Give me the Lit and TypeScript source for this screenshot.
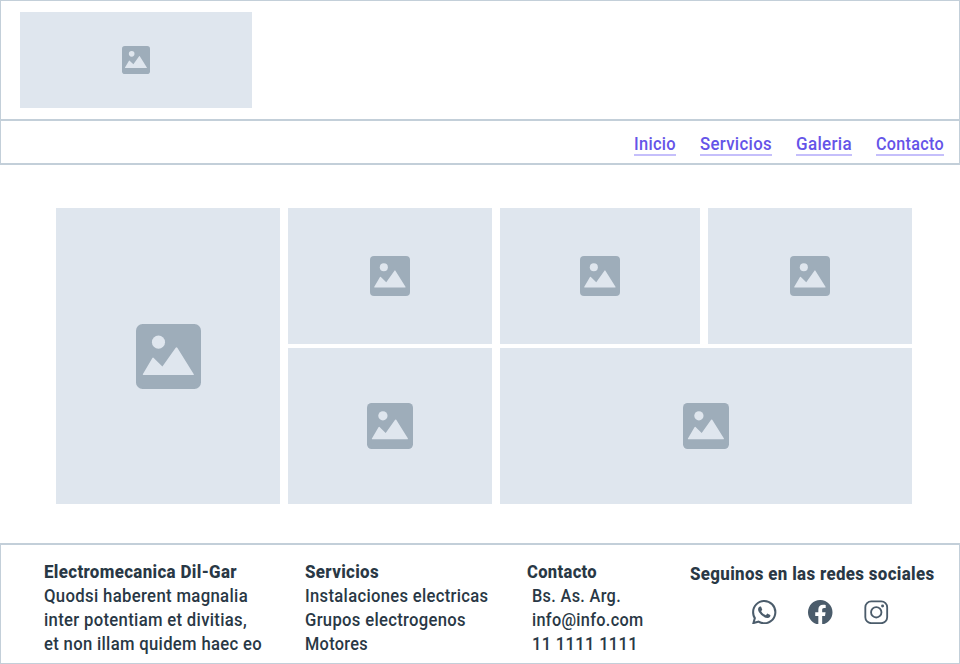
import { LitElement, html, css, svg } from "lit";
import { customElement, property } from "lit/decorators.js";

/** One line of text set to a fixed measure. */
@customElement("text-line")
class TextLine extends LitElement {
  @property() text = "";
  @property({ type: Number }) width = 0;

  static styles = css`
    :host { display: block; height: 24px; }
    .line { display: block; height: 24px; overflow: visible; fill: currentColor; white-space: pre; letter-spacing: 0.35px; }
  `;

  render() {
    return html`<svg class="line" width=${this.width} height="24">
      ${svg`<text x="0" y="18" textLength=${this.width} lengthAdjust="spacingAndGlyphs">${this.text}</text>`}
    </svg>`;
  }
}

/** Grey block with a centred picture glyph. */
@customElement("image-placeholder")
class ImagePlaceholder extends LitElement {
  @property({ type: Number }) size = 40;

  static styles = css`
    :host { display: flex; align-items: center; justify-content: center; background: #dfe6ee; }
    .glyph { display: block; }
    .frame { fill: #9eadba; }
    .scene { fill: #dfe6ee; }
  `;

  render() {
    return html`<svg class="glyph" width=${this.size} height=${this.size} viewBox="0 0 64.5 64.5">
      <rect class="frame" x="0" y="0" width="64.5" height="64.5" rx="6.5" />
      <circle class="scene" cx="22.3" cy="18" r="6.5" />
      <path class="scene" d="M6.900 49.700Q6.200 50.700 7.500 50.700H56.700Q58 50.700 57.200 49.500L41 23.600Q40.200 22.500 39.400 23.600L26.200 42.200L17.600 33.700Q16.800 32.900 16.100 34Z" />
    </svg>`;
  }
}

const whatsapp = html`<svg class="icon" viewBox="0 0 16 16"><path d="M13.601 2.326A7.854 7.854 0 0 0 7.994 0C3.627 0 .068 3.558.064 7.926c0 1.399.366 2.760 1.057 3.965L0 16l4.204-1.102a7.933 7.933 0 0 0 3.790.965h.004c4.368 0 7.926-3.558 7.930-7.930A7.898 7.898 0 0 0 13.600 2.326zM7.994 14.521a6.573 6.573 0 0 1-3.356-.920l-.240-.144-2.494.654.666-2.433-.156-.251a6.560 6.560 0 0 1-1.007-3.505c0-3.626 2.957-6.584 6.591-6.584a6.560 6.560 0 0 1 4.660 1.931 6.557 6.557 0 0 1 1.928 4.660c-.004 3.639-2.961 6.592-6.592 6.592zm3.615-4.934c-.197-.099-1.170-.578-1.353-.646-.182-.065-.315-.099-.445.099-.133.197-.513.646-.627.775-.114.133-.232.148-.430.050-.197-.100-.836-.308-1.592-.985-.590-.525-.985-1.175-1.103-1.372-.114-.198-.011-.304.088-.403.087-.088.197-.232.296-.346.100-.114.133-.198.198-.330.065-.134.034-.248-.015-.347-.050-.099-.445-1.076-.612-1.470-.160-.389-.323-.335-.445-.340-.114-.007-.247-.007-.380-.007a.729.729 0 0 0-.529.247c-.182.198-.691.677-.691 1.654 0 .977.710 1.916.810 2.049.098.133 1.394 2.132 3.383 2.992.470.205.840.326 1.129.418.475.152.904.129 1.246.080.380-.058 1.171-.480 1.338-.943.164-.464.164-.860.114-.943-.049-.084-.182-.133-.380-.232z" /></svg>`;

const facebook = html`<svg class="icon" viewBox="0 0 16 16"><path d="M16 8.049c0-4.446-3.582-8.050-8-8.050C3.580 0-.002 3.603-.002 8.050c0 4.017 2.926 7.347 6.750 7.951v-5.625h-2.030V8.050H6.750V6.275c0-2.017 1.195-3.131 3.022-3.131.876 0 1.791.157 1.791.157v1.980h-1.009c-.993 0-1.303.621-1.303 1.258v1.510h2.218l-.354 2.326H9.250V16c3.824-.604 6.750-3.934 6.750-7.951z" /></svg>`;

const instagram = html`<svg class="icon outline" viewBox="0 0 24 24">
  <rect x="1.300" y="1.300" width="21.400" height="21.400" rx="5.800" />
  <circle cx="12" cy="12" r="5.100" />
  <circle class="dot" cx="18.200" cy="5.900" r="1.450" />
</svg>`;

const links: [string, number][] = [
  ["Inicio", 42],
  ["Servicios", 72],
  ["Galeria", 56],
  ["Contacto", 68],
];

const columns = [
  {
    name: "company",
    title: ["Electromecanica Dil-Gar", 193],
    lines: [
      ["Quodsi haberent magnalia", 204],
      ["inter potentiam et divitias,", 203],
      ["et non illam quidem haec eo", 218],
    ],
  },
  {
    name: "services",
    title: ["Servicios", 74],
    lines: [
      ["Instalaciones electricas", 183.5],
      ["Grupos electrogenos", 161],
      ["Motores", 63],
    ],
  },
  {
    name: "contact",
    title: ["Contacto", 70],
    lines: [
      ["Bs. As. Arg.", 89],
      ["info@info.com", 111.5],
      ["11 1111 1111", 106],
    ],
  },
];

@customElement("app-root")
class AppRoot extends LitElement {
  static styles = css`
    :host {
      display: flex;
      flex-direction: column;
      width: 960px;
      height: 664px;
      background: #fff;
      color: #293845;
      font: 500 18px/24px Roboto, "Liberation Sans", sans-serif;
    }
    * { box-sizing: border-box; }
    .header { height: 120px; padding: 11px 19px; border: 1px solid #c3cfd9; }
    .logo { width: 232px; height: 96px; }
    .nav {
      display: flex;
      justify-content: flex-end;
      gap: 24px;
      height: 45px;
      padding: 11px 15px 0 0;
      border: 1px solid #c3cfd9;
      border-bottom-width: 2px;
    }
    .link { height: 24px; border-bottom: 2px solid #c5bffb; color: #6554e8; text-decoration: none; }
    .gallery {
      display: grid;
      grid-template: 136px 156px / 224px 204px 200px 204px;
      gap: 4px 8px;
      padding: 43px 48px 39px 56px;
    }
    .tall { grid-row: span 2; }
    .wide { grid-column: span 2; }
    .footer {
      display: flex;
      height: 121px;
      padding: 15px 0 0 43px;
      border: 1px solid #c3cfd9;
      border-top-width: 2px;
    }
    .title { font-weight: 800; }
    .company { width: 261px; }
    .services { width: 222px; }
    .contact { width: 163px; }
    .contact .lines { padding-left: 5px; }
    .social { padding-top: 2px; }
    .icons { display: flex; gap: 31.5px; padding: 13.7px 0 0 62px; }
    .icon { display: block; width: 24.5px; height: 24.5px; fill: #4b5c6b; }
    .outline { fill: none; stroke: #4b5c6b; stroke-width: 1.8; }
    .dot { fill: #4b5c6b; stroke: none; }
  `;

  render() {
    return html`
      <header class="header">
        <image-placeholder class="logo" size="28"></image-placeholder>
      </header>
      <nav class="nav">
        ${links.map(
          ([text, width]) => html`<a class="link" href="#"><text-line .text=${text} .width=${width}></text-line></a>`
        )}
      </nav>
      <main class="gallery">
        <image-placeholder class="tall" size="65"></image-placeholder>
        <image-placeholder size="40"></image-placeholder>
        <image-placeholder size="40"></image-placeholder>
        <image-placeholder size="40"></image-placeholder>
        <image-placeholder size="46"></image-placeholder>
        <image-placeholder class="wide" size="46"></image-placeholder>
      </main>
      <footer class="footer">
        ${columns.map(
          (c) => html`<section class=${c.name}>
            <text-line class="title" .text=${c.title[0]} .width=${c.title[1]}></text-line>
            <div class="lines">
              ${c.lines.map(([text, width]) => html`<text-line .text=${text} .width=${width}></text-line>`)}
            </div>
          </section>`
        )}
        <section class="social">
          <text-line class="title" .text=${"Seguinos en las redes sociales"} .width=${244.5}></text-line>
          <div class="icons">${whatsapp}${facebook}${instagram}</div>
        </section>
      </footer>
    `;
  }
}
